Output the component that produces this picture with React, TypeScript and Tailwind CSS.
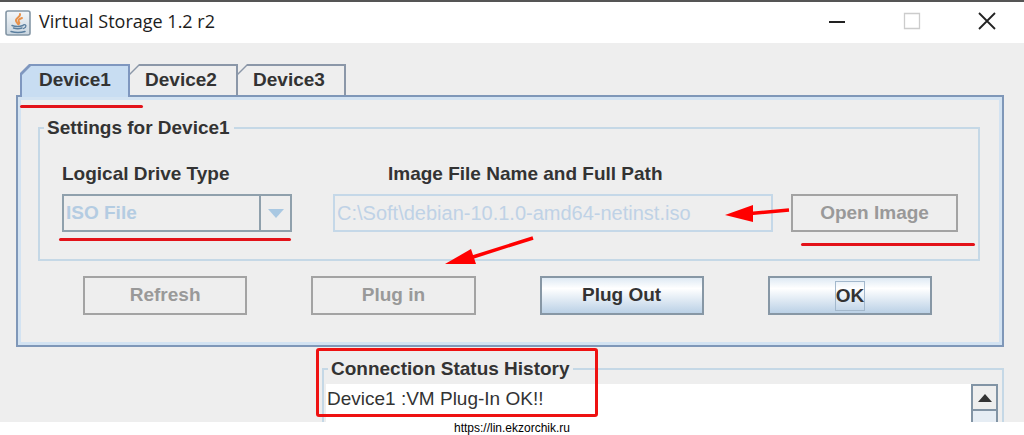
import type { ReactNode } from 'react';

const devices = ['Device1', 'Device2', 'Device3'];

function JavaIcon() {
  return (
    <svg viewBox="0 0 26 26" className="w-[26px] h-[26px]" aria-hidden="true">
      <defs>
        <linearGradient id="tile" x1="0" y1="0" x2="0" y2="1">
          <stop offset="0" stopColor="#f4f7f9" />
          <stop offset="1" stopColor="#c9d5df" />
        </linearGradient>
      </defs>
      <rect x="1" y="1" width="24" height="24" rx="2" fill="url(#tile)" stroke="#8496a5" strokeWidth="1.6" />
      <path d="M15 4c1 3-5 4-4 7 .4 1.300 1.500 2 2 3M17 8c-3 1-4.500 2.500-3 4 .7.8.5 1.600-.3 2.400" fill="none" stroke="#e8914a" strokeWidth="1.9" strokeLinecap="round" />
      <path d="M7 15.500c3 1 8 1 11 0M8.500 18c2.500.8 6 .8 8.500 0M6 21.500c4 1.200 10 1.200 14 0" fill="none" stroke="#5b7f9f" strokeWidth="1.500" strokeLinecap="round" />
      <path d="M18.500 14.800c3-.8 3.500 2.400 0 3.700" fill="none" stroke="#5b7f9f" strokeWidth="1.300" strokeLinecap="round" />
    </svg>
  );
}

function TitleBar() {
  return (
    <header className="flex items-center h-[43px] pl-[5px] pr-7 bg-white border-t-2 border-[#555555]">
      <JavaIcon />
      <h1 className="ml-2 pb-1 font-['Open_Sans',sans-serif] text-[18px] leading-6 text-[#1c1c1c]">Virtual Storage 1.2 r2</h1>
      <div className="ml-auto flex items-center gap-[57px] pb-[3px] text-[#222222]">
        <button type="button" aria-label="Minimize">
          <svg viewBox="0 0 18 18" className="w-[18px] h-[18px]">
            <path d="M1 10h16" stroke="currentColor" strokeWidth="2" />
          </svg>
        </button>
        <button type="button" aria-label="Maximize" disabled className="text-[#cccccc]">
          <svg viewBox="0 0 18 18" className="w-[18px] h-[18px]">
            <path d="M1.500 1.500h15v15h-15z" fill="none" stroke="currentColor" strokeWidth="1.300" />
          </svg>
        </button>
        <button type="button" aria-label="Close">
          <svg viewBox="0 0 18 18" className="w-[18px] h-[18px]">
            <path d="M1 1l16 16M17 1L1 17" stroke="currentColor" strokeWidth="1.800" />
          </svg>
        </button>
      </div>
    </header>
  );
}

function Tabs() {
  return (
    <div role="tablist" className="relative z-10 flex items-start pl-1 h-[31px]">
      {devices.map((name, i) =>
        i === 0 ? (
          <button key={name} type="button" role="tab" aria-selected="true" className="h-[33px] w-[110px] pt-[2px] px-[2px] bg-[#7f97bf] [clip-path:polygon(9px_0,100%_0,100%_100%,0_100%,0_9px)]">
            <span className="block h-full leading-7 bg-[#c8ddf2] [clip-path:polygon(9px_0,100%_0,100%_100%,0_100%,0_9px)]">{name}</span>
          </button>
        ) : (
          <button key={name} type="button" role="tab" aria-selected="false" className="h-[31px] w-[108px] pt-[2px] pr-[2px] bg-[#8b97a8] [clip-path:polygon(9px_0,100%_0,100%_100%,0_100%,0_9px)]">
            <span className="block h-full pr-1 leading-7 bg-[#eeeeee] [clip-path:polygon(9px_0,100%_0,100%_100%,0_100%,0_9px)]">{name}</span>
          </button>
        )
      )}
      <span className="absolute left-1 top-[41px] w-[123px] h-[3px] rounded-full bg-[#e31219]" />
    </div>
  );
}

function PushButton({ children, disabled }: { children: ReactNode; disabled?: boolean }) {
  return (
    <button
      type="button"
      disabled={disabled}
      className="h-[39px] border-2 border-[#8797a5] bg-linear-to-b from-[#dfeaf4] via-white via-30% to-[#bbd1e6] disabled:border-[#a3a3a3] disabled:bg-none disabled:text-[#999999]"
    >
      {children}
    </button>
  );
}

function Settings() {
  return (
    <fieldset className="min-w-0 border-2 border-[#c5d8e6] pl-[22px] pr-5 pb-[27px]">
      <legend className="-ml-[18px] px-[3px] pr-1 leading-6">Settings for Device1</legend>
      <div className="flex items-end pt-[22px]">
        <div className="relative w-[230px]">
          <label htmlFor="drive-type" className="block leading-6">Logical Drive Type</label>
          <div className="relative mt-2">
            <select id="drive-type" disabled className="block w-full h-[38px] appearance-none border-2 border-[#8fa0ac] pl-[2px] text-[#b4cce2] opacity-100">
              <option>ISO File</option>
            </select>
            <span className="pointer-events-none absolute right-0 top-0 flex items-center justify-center w-[33px] h-[38px] border-2 border-[#8fa0ac]">
              <svg viewBox="0 0 16 9" className="w-4 h-[9px]">
                <path d="M0 0h16L8 9z" fill="#a9c8e2" />
              </svg>
            </span>
          </div>
          <span className="absolute -left-[3px] top-[76px] w-[232px] h-[3px] rounded-full bg-[#e31219]" />
        </div>
        <div className="relative flex-1 min-w-0 ml-[41px]">
          <label htmlFor="image-path" className="block pl-[55px] leading-6">Image File Name and Full Path</label>
          <input
            id="image-path"
            type="text"
            disabled
            defaultValue="C:\Soft\debian-10.1.0-amd64-netinst.iso"
            className="block w-full h-[38px] mt-2 border-2 border-[#c5d8e8] px-[2px] text-[20px] font-normal text-[#bfd2e6]"
          />
          <svg viewBox="0 0 90 30" className="pointer-events-none absolute -right-[18px] top-8 w-[90px] h-[30px]">
            <path d="M88 16L44 20" stroke="#ff0000" strokeWidth="3.500" />
            <path d="M24 21L52 11v17z" fill="#ff0000" />
          </svg>
          <svg viewBox="0 0 90 32" className="pointer-events-none absolute left-[112px] top-[72px] w-[90px] h-8">
            <path d="M88 4L28 23" stroke="#ff0000" strokeWidth="3.500" />
            <path d="M0 30L26 15l5 15z" fill="#ff0000" />
          </svg>
        </div>
        <div className="relative w-[167px] ml-[18px]">
          <button type="button" disabled className="block w-full h-[38px] border-2 border-[#a3a3a3] text-[#999999]">Open Image</button>
          <span className="absolute left-[10px] top-[49px] w-[174px] h-[3px] rounded-full bg-[#e31219]" />
        </div>
      </div>
    </fieldset>
  );
}

function StatusHistory() {
  return (
    <section className="relative ml-[322px] mr-5 mt-[10px]">
      <fieldset className="min-w-0 border-2 border-b-0 border-[#c5d8e6] pl-[2px] pr-1">
        <legend className="ml-[2px] px-[3px] leading-6">Connection Status History</legend>
        <div className="flex h-[38px] mt-[3px] bg-white">
          <textarea
            readOnly
            rows={1}
            aria-label="Connection Status History"
            className="flex-1 resize-none overflow-hidden pt-[3px] px-[1px] font-normal leading-6"
            defaultValue="Device1 :VM Plug-In OK!!"
          />
          <div className="w-[27px] border-2 border-b-0 border-[#8294a5] bg-[#eeeeee]">
            <button type="button" aria-label="Scroll up" className="flex items-center justify-center w-full h-[25px] border-b-2 border-[#8294a5]">
              <svg viewBox="0 0 14 8" className="w-[14px] h-2">
                <path d="M7 0l7 8H0z" fill="#333333" />
              </svg>
            </button>
            <div className="h-[11px] bg-[#e6edf4]" />
          </div>
        </div>
      </fieldset>
      <span className="pointer-events-none absolute -left-[6px] -top-[9px] w-[282px] h-[69px] rounded-[3px] border-3 border-[#ee1111]" />
    </section>
  );
}

export default function App() {
  return (
    <div className="bg-white font-['Liberation_Sans',Arial,sans-serif] text-[19px] text-[#333333]">
      <TitleBar />
      <main className="overflow-hidden bg-[#eeeeee] pt-[21px] font-bold">
        <div className="ml-4 mr-5">
          <Tabs />
          <div role="tabpanel" className="border-2 border-[#7f97b8] pt-[19px] pb-[30px] shadow-[inset_0_0_0_3px_#d3e3f2]">
            <div className="pl-5 pr-[22px]">
              <Settings />
            </div>
            <div className="grid grid-cols-4 gap-16 mt-[15px] pl-[65px] pr-[70px]">
              <PushButton disabled>Refresh</PushButton>
              <PushButton disabled>Plug in</PushButton>
              <PushButton>Plug Out</PushButton>
              <PushButton>
                <span className="inline-block border border-[#a3b8cc] leading-7">OK</span>
              </PushButton>
            </div>
          </div>
        </div>
        <StatusHistory />
      </main>
      <footer className="text-center text-[12px] leading-[13px] text-black">https://lin.ekzorchik.ru</footer>
    </div>
  );
}
